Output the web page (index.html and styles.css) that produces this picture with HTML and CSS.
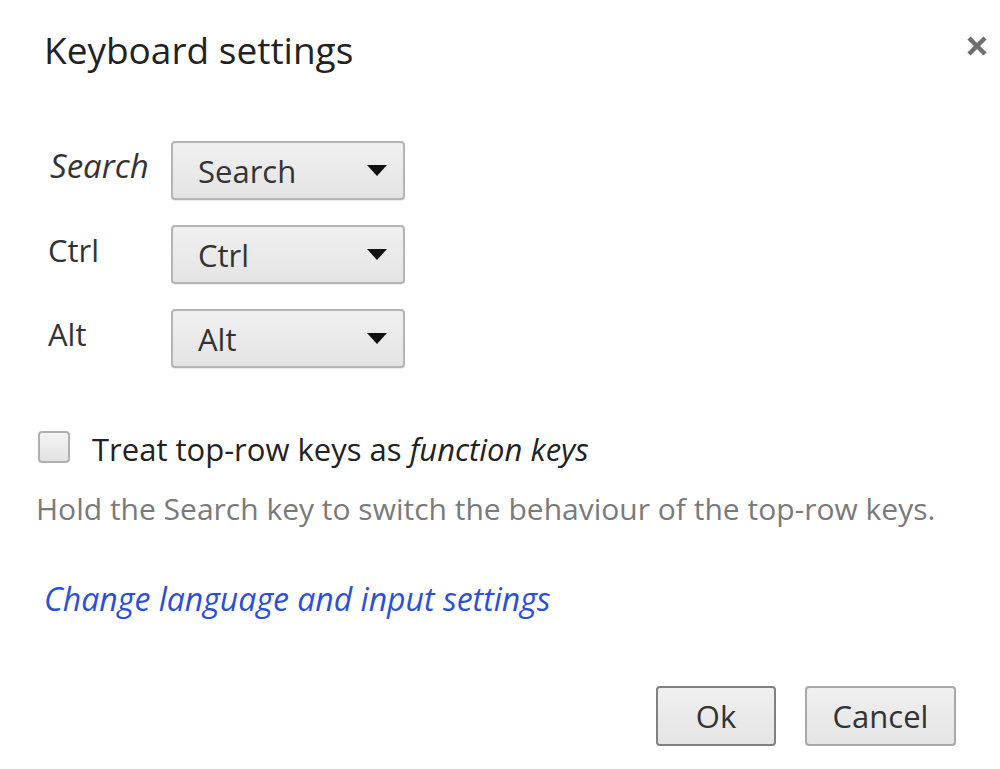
FILE: index.html
```html
<!DOCTYPE html>
<html>
<head>
<meta charset="utf-8">
<link rel="stylesheet" href="styles.css">
</head>
<body>
<div class="dialog">
  <div class="header">
    <h1 class="title">Keyboard settings</h1>
    <svg class="close" width="22" height="22" viewBox="0 0 22 22" aria-hidden="true">
      <path d="M3 3 L19 19 M19 3 L3 19" stroke="#6f6f6f" stroke-width="4.5" stroke-linecap="butt"/>
    </svg>
  </div>
  <div class="rows">
    <div class="row">
      <span class="label italic">Search</span>
      <div class="select"><span>Search</span><span class="arrow"></span></div>
    </div>
    <div class="row">
      <span class="label">Ctrl</span>
      <div class="select"><span>Ctrl</span><span class="arrow"></span></div>
    </div>
    <div class="row">
      <span class="label">Alt</span>
      <div class="select"><span>Alt</span><span class="arrow"></span></div>
    </div>
  </div>
  <div class="check-row">
    <span class="checkbox"></span>
    <span class="check-label">Treat top-row keys as <i>function keys</i></span>
  </div>
  <div class="hint">Hold the Search key to switch the behaviour of the top-row keys.</div>
  <a class="link">Change language and input settings</a>
  <div class="buttons">
    <button class="btn ok">Ok</button>
    <button class="btn cancel">Cancel</button>
  </div>
</div>
</body>
</html>
```
FILE: styles.css
```css
html, body {
  margin: 0;
  padding: 0;
  background: #fff;
}
body {
  font-family: "Open Sans", "Noto Sans", sans-serif;
  color: #333;
  width: 1000px;
  height: 769px;
  overflow: hidden;
}
.dialog {
  padding: 20px 12px 0 44px;
  box-sizing: border-box;
}
.header {
  display: flex;
  justify-content: space-between;
  align-items: flex-start;
}
.title {
  margin: 0;
  font-weight: normal;
  font-size: 37px;
  line-height: 60px;
  color: #222;
}
.close {
  margin-top: 15px;
  margin-right: 0;
}
.rows {
  margin-top: 61px;
  display: flex;
  flex-direction: column;
  gap: 25px;
}
.row {
  display: flex;
  align-items: center;
  height: 59px;
}
.label {
  width: 123px;
  font-size: 31px;
  padding-left: 4px;
  color: #333;
  margin-top: -10px;
}
.label.italic {
  font-style: italic;
  font-size: 33px;
  padding-left: 6px;
  width: 121px;
}
.select {
  width: 234px;
  height: 59px;
  box-sizing: border-box;
  border: 2px solid #b5b5b5;
  border-radius: 4px;
  background: linear-gradient(#f0f0f0, #e4e4e4);
  box-shadow: 0 1px 1px rgba(0,0,0,0.08);
  display: flex;
  align-items: center;
  justify-content: space-between;
  padding: 0 16px 0 25px;
  font-size: 31px;
  color: #333;
}
.arrow {
  width: 0;
  height: 0;
  border-left: 10px solid transparent;
  border-right: 10px solid transparent;
  border-top: 11px solid #111;
}
.check-row {
  margin-top: 56px;
  margin-left: -6px;
  display: flex;
  align-items: center;
  gap: 22px;
}
.checkbox {
  width: 28px;
  height: 28px;
  border: 2px solid #b0b0b0;
  border-radius: 4px;
  background: linear-gradient(#f4f4f4, #e2e2e2);
  box-sizing: content-box;
}
.check-label {
  font-size: 31px;
  color: #222;
  margin-top: 4px;
}
.check-label i {
  font-style: italic;
}
.hint {
  margin-top: 18px;
  margin-left: -8px;
  font-size: 30px;
  color: #7a7a7a;
}
.link {
  display: block;
  margin-top: 48px;
  font-size: 32px;
  font-style: italic;
  color: #2a50d8;
}
.buttons {
  margin-top: 66px;
  display: flex;
  justify-content: flex-end;
  gap: 29px;
  padding-right: 32px;
}
.btn {
  font-family: "Open Sans", "Noto Sans", sans-serif;
  font-size: 31px;
  height: 60px;
  border: 2px solid #a8a8a8;
  border-radius: 4px;
  background: linear-gradient(#f0f0f0, #e4e4e4);
  color: #333;
  padding: 0 20px;
}
.btn.ok {
  width: 120px;
  border-color: #808080;
}
.btn.cancel {
  width: 151px;
}
```
